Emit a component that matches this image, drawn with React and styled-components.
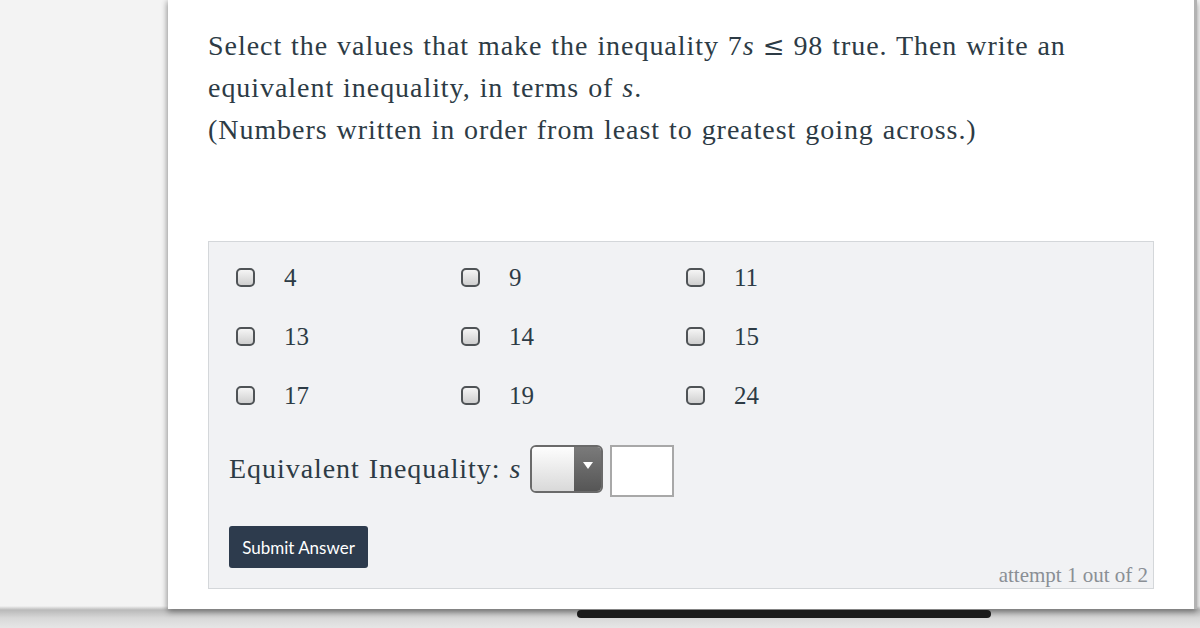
import React from "react";
import styled, { createGlobalStyle } from "styled-components";

const Global = createGlobalStyle`
  html, body { margin: 0; padding: 0; }
  body {
    width: 1200px;
    height: 628px;
    overflow: hidden;
    background: #f1f1f1;
    font-family: "Liberation Serif", "DejaVu Serif", serif;
  }
`;

const Page = styled.div`
  position: relative;
  width: 1200px;
  height: 628px;
  display: flex;
  align-items: flex-start;
  padding-left: 168px;
  box-sizing: border-box;
  background: linear-gradient(to bottom, #f3f3f3 0, #f3f3f3 606px, #b9b9b9 610px, #d8d8d8 618px, #e6e6e6 628px);
`;

const Card = styled.div`
  width: 1029px;
  flex: none;
  height: 609px;
  background: #fff;
  box-sizing: border-box;
  padding: 25px 40px 0 40px;
  box-shadow: 0 3px 6px rgba(0, 0, 0, 0.35), -2px 0 5px rgba(0, 0, 0, 0.12);
  border-right: 3px solid #b3b3b3;
  display: flex;
  flex-direction: column;
`;

const Question = styled.p`
  margin: 0;
  font-size: 28px;
  line-height: 42px;
  color: #2d3b45;
  letter-spacing: 0.95px;
  word-spacing: 1px;
`;

const MathVar = styled.i`
  font-family: "Liberation Serif", serif;
  font-style: italic;
  line-height: 1;
`;

const Rel = styled.span`
  font-family: "DejaVu Serif", serif;
  font-size: 26px;
  line-height: 1;
  margin: 0 8px;
`;

const AnswerBox = styled.div`
  margin-top: 90px;
  height: 348px;
  box-sizing: border-box;
  border: 1px solid #d4d7da;
  background: #f1f2f4;
  padding: 6px 5px 0 20px;
  display: flex;
  flex-direction: column;
`;

const Choices = styled.div`
  display: grid;
  grid-template-columns: 225px 225px 225px;
  padding-left: 7px;
`;

const Choice = styled.label`
  height: 59px;
  display: flex;
  align-items: center;
  gap: 29px;
  font-size: 25px;
  color: #2d3b45;
`;

const Box = styled.span`
  width: 15px;
  height: 15px;
  flex: none;
  border: 2.5px solid #4f5356;
  border-radius: 5px;
  background: linear-gradient(to bottom, #f5f5f5, #cfcfcf);
`;

const EquivRow = styled.div`
  margin-top: 20px;
  display: flex;
  align-items: flex-start;
  height: 52px;
`;

const EquivLabel = styled.span`
  font-size: 28px;
  line-height: 48px;
  color: #2d3b45;
  letter-spacing: 0.95px;
  word-spacing: 1px;
  margin-right: 9px;
`;

const Select = styled.div`
  width: 73px;
  height: 48px;
  box-sizing: border-box;
  border: 2px solid #6a6a6a;
  border-radius: 6px;
  overflow: hidden;
  display: flex;
`;

const SelectFace = styled.div`
  flex: 1;
  background: linear-gradient(to bottom, #fdfdfd, #d9d9d9);
`;

const SelectArrow = styled.div`
  width: 27px;
  background: linear-gradient(to bottom, #7a7a7a, #565656);
  display: flex;
  align-items: center;
  justify-content: center;
  &::after {
    content: "";
    border-left: 5px solid transparent;
    border-right: 5px solid transparent;
    border-top: 7px solid #fff;
    margin-bottom: 8px;
  }
`;

const TextInput = styled.div`
  width: 64px;
  height: 52px;
  box-sizing: border-box;
  margin-left: 7px;
  border: 2px solid #a8a8a8;
  background: #fff;
`;

const Footer = styled.div`
  margin-top: 29px;
  display: flex;
  justify-content: space-between;
  align-items: flex-start;
`;

const SubmitButton = styled.button`
  width: 139px;
  height: 42px;
  flex: none;
  border: none;
  border-radius: 3px;
  background: #2d3b4d;
  color: #fff;
  font-family: Lato, "Liberation Sans", sans-serif;
  font-size: 17px;
  padding: 0;
`;

const Attempt = styled.div`
  margin-top: 37px;
  font-size: 21px;
  line-height: 24px;
  color: #8a8f95;
`;

const HomeBar = styled.div`
  position: absolute;
  left: 577px;
  top: 610px;
  width: 414px;
  height: 8px;
  border-radius: 4px;
  background: #1b1b1b;
`;

const values = [4, 9, 11, 13, 14, 15, 17, 19, 24];

export default function App() {
  return (
    <>
      <Global />
      <Page>
        <Card>
          <Question>
            Select the values that make the inequality 7<MathVar>s</MathVar>
            <Rel>≤</Rel>98 true. Then write an
            <br />
            equivalent inequality, in terms of <MathVar>s</MathVar>.
            <br />
            (Numbers written in order from least to greatest going across.)
          </Question>
          <AnswerBox>
            <Choices>
              {values.map((v) => (
                <Choice key={v}>
                  <Box />
                  {v}
                </Choice>
              ))}
            </Choices>
            <EquivRow>
              <EquivLabel>
                Equivalent Inequality: <MathVar>s</MathVar>
              </EquivLabel>
              <Select>
                <SelectFace />
                <SelectArrow />
              </Select>
              <TextInput />
            </EquivRow>
            <Footer>
              <SubmitButton>Submit Answer</SubmitButton>
              <Attempt>attempt 1 out of 2</Attempt>
            </Footer>
          </AnswerBox>
        </Card>
        <HomeBar />
      </Page>
    </>
  );
}
